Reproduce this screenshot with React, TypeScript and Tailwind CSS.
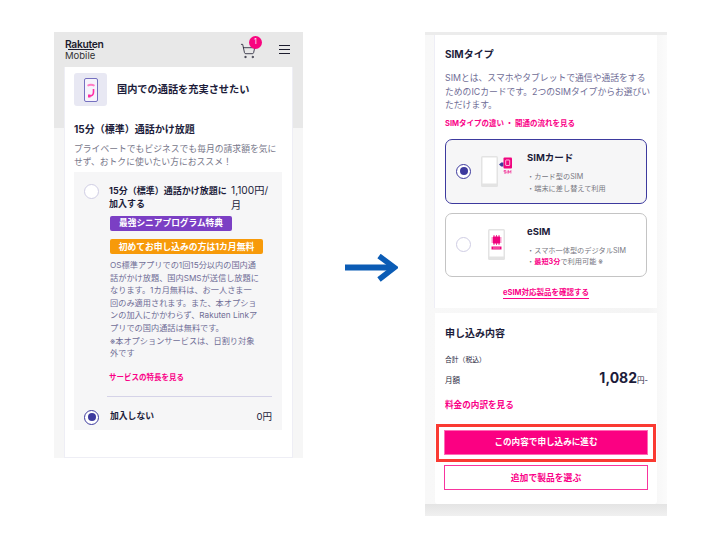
import { ShoppingCart } from "lucide-react";

const FONT = "font-['Inter','Noto_Sans_CJK_JP',sans-serif]";

const descLines = [
  "OS標準アプリでの1回15分以内の国内通",
  "話がかけ放題、国内SMSが送信し放題に",
  "なります。1カ月無料は、お一人さま一",
  "回のみ適用されます。また、本オプショ",
  "ンの加入にかかわらず、Rakuten Linkア",
  "プリでの国内通話は無料です。",
  "※本オプションサービスは、日割り対象",
  "外です",
];

const Radio = ({ checked }: { checked?: boolean }) => (
  <div
    className={`w-[15px] h-[15px] shrink-0 rounded-full flex items-center justify-center bg-white border ${
      checked ? "border-[#3d3a9e] border-[1.5px]" : "border-[#cfcde4]"
    }`}
  >
    {checked && <div className="w-[8px] h-[8px] rounded-full bg-[#3d3a9e]" />}
  </div>
);

const PhoneIcon = () => (
  <svg width="14" height="24" viewBox="0 0 14 24" fill="none">
    <rect x="0.5" y="0.5" width="13" height="23" rx="1.5" fill="#f6f3fc" stroke="#7570c0" />
    <path d="M3 7c2.4-1.6 5.6-1.6 8 0l-1 1.5c-1.8-1-4.2-1-6 0z" fill="#ff7cc4" />
    <path d="M9.5 11v3c0 2.4-1.6 4-4 4" stroke="#ff2ea6" strokeWidth="1.6" />
    <path d="M4 16.5l2.5 0v3l-2.5 0z" fill="#ff2ea6" />
  </svg>
);

const SimIllustration = () => (
  <svg width="32" height="31" viewBox="0 0 32 31" fill="none">
    <rect x="0" y="0" width="17" height="31" rx="1.5" fill="#e3e3e3" />
    <rect x="1.5" y="1.5" width="14" height="26" fill="#ffffff" />
    <path d="M18 8.5l2-1.8v3.6z" fill="#3d3a9e" />
    <rect x="20" y="6.5" width="2.5" height="4" fill="#3d3a9e" />
    <rect x="22.5" y="1.5" width="8.5" height="11" rx="1" fill="#f0047f" />
    <rect x="24.7" y="4" width="4" height="5.5" rx="0.5" stroke="#ffffff" strokeWidth="0.7" />
    <path
      d="M25 14.5h-2v1.3h2v1.3h-2M26.2 14.5v3M27.5 17.5v-3l1.2 2 1.2-2v3"
      stroke="#f0047f"
      strokeWidth="0.6"
    />
  </svg>
);

const EsimIllustration = () => (
  <svg width="17" height="31" viewBox="0 0 17 31" fill="none">
    <rect x="0" y="0" width="17" height="31" rx="1.5" fill="#e3e3e3" />
    <rect x="1.5" y="1.5" width="14" height="26" fill="#ffffff" />
    <rect x="5" y="7.5" width="7" height="7" fill="#f0047f" />
    <path
      d="M6 6v10M8.5 6v10M11 6v10M3.5 9h10M3.5 11h10M3.5 13h10"
      stroke="#f0047f"
      strokeWidth="0.8"
    />
    <path d="M3.5 17.5h10v3h-10z" fill="#f0047f" />
    <path d="M5 19h7" stroke="#ffffff" strokeWidth="0.5" />
  </svg>
);

const LeftPhone = () => (
  <div className="w-[249px] h-[426px] bg-[linear-gradient(#e8e8e8_96px,#f6f6f6_96px)] flex flex-col shrink-0">
    <div className="h-[35px] bg-[#e8e8e8] flex items-center pl-[11px] pr-[13px] shrink-0">
      <div className="flex flex-col leading-none text-[#1c1c2e] relative">
        <span className="text-[10.3px] font-semibold leading-[11px] tracking-[-0.3px]">Rakuten</span>
        <div className="absolute left-[3px] top-[10px] w-[26px] h-px bg-[#1c1c2e]" />
        <span className="text-[9.5px] leading-[11px] text-[#333]">Mobile</span>
      </div>
      <div className="ml-auto relative mr-[23px] mt-[3px]">
        <ShoppingCart size={16} strokeWidth={1.2} className="text-[#1c1c2e]" />
        <div className="absolute -top-[7px] left-[9px] w-[13px] h-[13px] rounded-full bg-[#f8057f] text-white text-[7px] flex items-center justify-center">
          1
        </div>
      </div>
      <div className="w-[11px] flex flex-col gap-[3px]">
        <div className="h-px bg-[#1c1c2e]" />
        <div className="h-px bg-[#1c1c2e]" />
        <div className="h-px bg-[#1c1c2e]" />
      </div>
    </div>
    <div className="flex-1 bg-white mx-[10px] w-[229px] border-l border-b border-r border-[#eeeef5] pl-[9px] pr-[9px] pt-[6px]">
      <div className="flex items-center">
        <div className="w-[33px] h-[33px] rounded-[3px] bg-[#e8e8f3] flex items-center justify-center">
          <PhoneIcon />
        </div>
        <span className="ml-[10px] text-[10.2px] font-bold text-[#1c1c3a] whitespace-nowrap">国内での通話を充実させたい</span>
      </div>
      <div className="mt-[16px] text-[10px] font-bold leading-[14px] text-[#1c1c3a] whitespace-nowrap">15分（標準）通話かけ放題</div>
      <div className="mt-[6px] text-[8.8px] leading-[13px] text-[#77778a] whitespace-nowrap">
        <div>プライベートでもビジネスでも毎月の請求額を気に</div>
        <div>せず、おトクに使いたい方におススメ！</div>
      </div>
      <div className="mt-[4px] w-[208px] h-[258px] bg-[#f6f6f7] pl-[10px] pt-[12px]">
        <div className="flex">
          <Radio />
          <div className="ml-[10px] w-[122px] text-[9px] font-bold leading-[13px] text-[#1c1c3a] whitespace-nowrap">
            <div>15分（標準）通話かけ放題に</div>
            <div>加入する</div>
          </div>
          <div className="text-[10.2px] leading-[15px] text-[#1c1c3a] -mt-px whitespace-nowrap">
            1,100円/
            <br />月
          </div>
        </div>
        <div className="ml-[26px] mt-[3px] w-[122px] h-[15px] rounded-[2px] bg-[#7b3fc4] text-white text-[8.7px] font-bold flex items-center justify-center whitespace-nowrap">
          最強シニアプログラム特典
        </div>
        <div className="ml-[26px] mt-[8px] w-[153px] h-[15px] rounded-[2px] bg-[#f79a0a] text-white text-[8.8px] font-bold flex items-center justify-center whitespace-nowrap">
          初めてお申し込みの方は1カ月無料
        </div>
        <div className="ml-[26px] mt-[5px] text-[8.2px] leading-[12.6px] text-[#6f6d96] whitespace-nowrap">
          {descLines.map((line) => (
            <div key={line}>{line}</div>
          ))}
        </div>
        <div className="ml-[25px] mt-[12px] text-[7.5px] font-bold leading-[12px] text-[#fa0087]">サービスの特長を見る</div>
        <div className="ml-[23px] mt-[12px] w-[165px] border-t border-[#d5d3e8]" />
        <div className="flex items-center mt-[13px]">
          <Radio checked />
          <span className="ml-[11px] text-[8.8px] font-bold text-[#1c1c3a] -mt-[3px]">加入しない</span>
          <span className="ml-auto mr-[10px] text-[9.5px] text-[#1c1c3a]">0円</span>
        </div>
      </div>
    </div>
  </div>
);

const SimOption = ({
  checked,
  title,
  illustration,
  children,
}: {
  checked?: boolean;
  title: string;
  illustration: React.ReactNode;
  children: React.ReactNode;
}) => (
  <div
    className={`w-[202px] rounded-[7px] flex items-center pl-[10px] border-[1.5px] ${
      checked ? "h-[65px] border-[#3d3a9e] bg-[#f6f6f7]" : "h-[64px] border-[#c4c4c4] bg-white"
    }`}
  >
    <Radio checked={checked} />
    <div className={`shrink-0 ${checked ? "ml-[10px] w-[37px]" : "ml-[17px] w-[30px]"}`}>{illustration}</div>
    <div className="ml-[9px] pt-[3px] whitespace-nowrap">
      <div className="text-[9.5px] font-bold leading-[14px] text-[#1c1c3a]">{title}</div>
      <div className="mt-[6px] text-[7.2px] leading-[11.5px] text-[#77777f]">{children}</div>
    </div>
  </div>
);

const RightPhone = () => (
  <div className="w-[242px] h-[484px] bg-[linear-gradient(90deg,#f8f8f8,#f4f4f4_92%,#fbfbfb)] flex flex-col shrink-0 relative">
    <div className="h-[3px] bg-[#ececec] shrink-0" />
    <div className="ml-[10px] w-[222px] h-[273px] bg-white pl-[10px] pt-[12px] shadow-[-1px_0_0_#eeeef6]">
      <div className="text-[10px] font-bold leading-[14px] text-[#1c1c3a]">SIMタイプ</div>
      <div className="mt-[10px] text-[8.8px] leading-[13.5px] text-[#6f6d96] whitespace-nowrap">
        <div>SIMとは、スマホやタブレットで通信や通話をする</div>
        <div>ためのICカードです。2つのSIMタイプからお選びい</div>
        <div>ただけます。</div>
      </div>
      <div className="mt-[6px] text-[7.5px] font-bold leading-[12px] text-[#fa0087] whitespace-nowrap">SIMタイプの違い ・ 開通の流れを見る</div>
      <div className="mt-[9px] flex flex-col gap-[9px]">
        <SimOption checked title="SIMカード" illustration={<SimIllustration />}>
          <div>・カード型のSIM</div>
          <div>・端末に差し替えて利用</div>
        </SimOption>
        <SimOption title="eSIM" illustration={<EsimIllustration />}>
          <div>・スマホ一体型のデジタルSIM</div>
          <div>
            ・<span className="font-bold text-[#fa0087]">最短3分</span>で利用可能 ※
          </div>
        </SimOption>
      </div>
      <div className="mt-[10px] w-[202px] flex justify-center">
        <span className="text-[7.5px] font-bold leading-[11px] text-[#fa0087] border-b border-[#fa0087]">eSIM対応製品を確認する</span>
      </div>
    </div>
    <div className="ml-[10px] mt-[5px] w-[222px] h-[191px] bg-white rounded-b-[3px] pl-[9px] pt-[13px]">
      <div className="ml-px text-[10px] font-bold leading-[14px] text-[#1c1c3a]">申し込み内容</div>
      <div className="ml-px mt-[14px] text-[6.8px] leading-[12px] text-[#1c1c3a]">合計（税込）</div>
      <div className="ml-px mt-[2px] flex items-end justify-between pr-[9px]">
        <span className="text-[7.5px] leading-[18px] text-[#1c1c3a]">月額</span>
        <span className="text-[#1c1c3a] leading-[18px] whitespace-nowrap">
          <span className="text-[14px] font-bold">1,082</span>
          <span className="text-[7.5px]">円-</span>
        </span>
      </div>
      <div className="ml-px mt-[9px] text-[8.6px] font-bold leading-[12px] text-[#fa0087]">料金の内訳を見る</div>
      <div className="mt-[19px] w-[204px] h-[25px] bg-[#fb0082] text-white text-[8.6px] font-bold flex items-center justify-center border border-[#ff6ab5]">
        この内容で申し込みに進む
      </div>
      <div className="mt-[10px] w-[204px] h-[25px] bg-white text-[#fa0087] text-[8.8px] font-bold flex items-center justify-center border border-[#f8349e]">
        追加で製品を選ぶ
      </div>
    </div>
    <div className="flex-1 bg-[linear-gradient(#e4e4e4,#f0f0f0)]" />
    <div className="absolute left-[11px] top-[392px] w-[220px] h-[38px] border-[3px] border-[#fa3a32]" />
  </div>
);

export default function App() {
  return (
    <div className={`w-[710px] h-[533px] bg-white overflow-hidden flex items-start pl-[54px] pt-[32px] ${FONT}`}>
      <LeftPhone />
      <div className="ml-[42px] mt-[222px] w-[80px] shrink-0">
        <svg width="53" height="28" viewBox="0 0 53 28" fill="none">
          <path d="M0 13.5h48" stroke="#0b5cb5" strokeWidth="6" />
          <path d="M34 2L49.5 13.5L34 25.5" stroke="#0b5cb5" strokeWidth="5.5" />
        </svg>
      </div>
      <RightPhone />
    </div>
  );
}
